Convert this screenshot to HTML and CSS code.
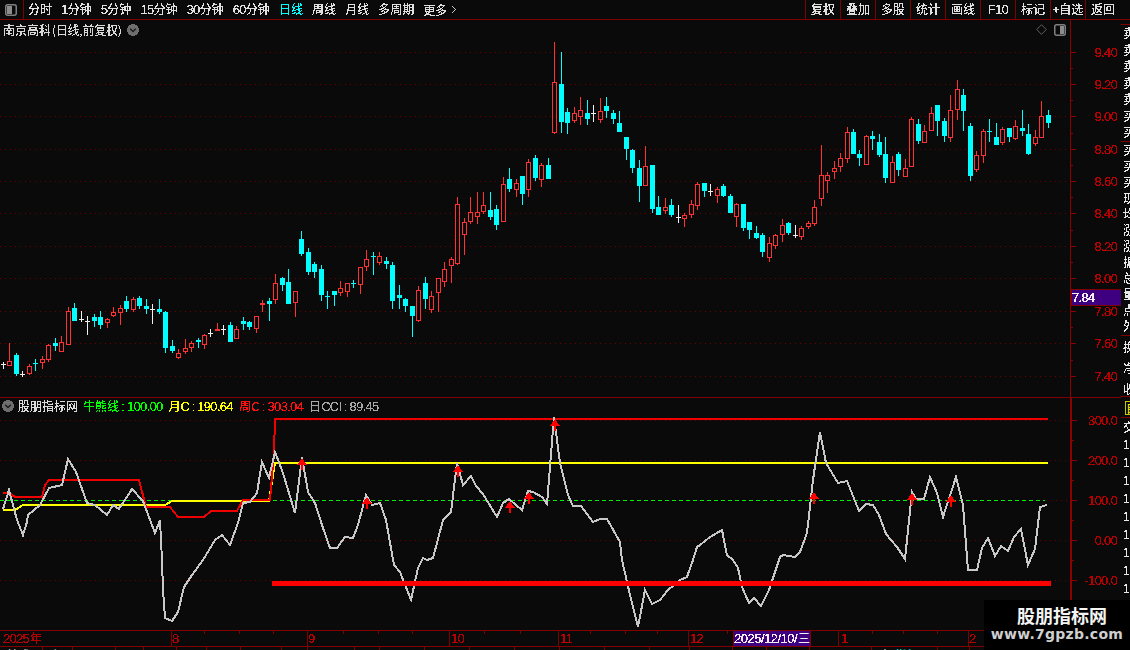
FILE: index.html
```html
<!DOCTYPE html>
<html lang="zh">
<head>
<meta charset="utf-8">
<title>南京高科 日线</title>
<link rel="stylesheet" href="styles.css">
</head>
<body>
<svg class="defs" width="0" height="0" aria-hidden="true">
  <filter id="aliased" x="-5%" y="-20%" width="110%" height="140%" color-interpolation-filters="sRGB">
    <feComponentTransfer><feFuncA type="discrete" tableValues="0 0 1 1 1"/></feComponentTransfer>
  </filter>
  <filter id="aliased-d" x="-5%" y="-20%" width="110%" height="140%" color-interpolation-filters="sRGB">
    <feComponentTransfer><feFuncA type="discrete" tableValues="0 1 1"/></feComponentTransfer>
  </filter>
</svg>
<div class="app">
  <header class="toolbar">
    <div class="panelbtn">
      <svg class="toggle" viewBox="0 0 12 12"><rect class="tg-frame" x="0.75" y="0.75" width="10.5" height="10.5" rx="2"/><rect class="tg-fill" x="2" y="2" width="5" height="8"/></svg>
    </div>
    <nav class="periods">
      <span>分时</span>
      <span><i class="n">1</i>分钟</span>
      <span><i class="n">5</i>分钟</span>
      <span><i class="n">15</i>分钟</span>
      <span><i class="n">30</i>分钟</span>
      <span><i class="n">60</i>分钟</span>
      <span class="active">日线</span>
      <span>周线</span>
      <span>月线</span>
      <span>多周期</span>
      <span class="more">更多<svg class="chev" viewBox="0 0 7 10"><path d="M1 1l4.5 4L1 9"/></svg></span>
    </nav>
    <nav class="tools">
      <span>复权</span><span>叠加</span><span>多股</span><span>统计</span><span>画线</span><span><i class="n">F10</i></span><span>标记</span><span>+自选</span><span>返回</span>
    </nav>
  </header>

  <div class="workspace">
    <div class="charts">
      <section class="pane pane-main">
        <svg id="mainChart" class="chart" width="1121" height="377" viewBox="0 20 1121 377"></svg>
        <div class="main-head">
          <div class="title">
            <span>南京高科</span><span class="title-sub">(日线,前复权)</span>
            <svg class="round" viewBox="0 0 12 12"><circle cx="6" cy="6" r="6"/><path d="M3.2 4.8L6 7.6l2.8-2.8"/></svg>
          </div>
          <div class="head-tools">
            <svg class="diamond" viewBox="0 0 12 12"><path d="M6 .8L11.2 6 6 11.2.8 6z"/></svg>
            <svg class="toggle" viewBox="0 0 12 12"><rect class="tg-frame" x="0.75" y="0.75" width="10.5" height="10.5" rx="2"/><rect class="tg-fill" x="6" y="2" width="4" height="8"/></svg>
          </div>
        </div>
      </section>

      <section class="pane pane-sub">
        <svg id="subChart" class="chart" width="1121" height="232" viewBox="0 398 1121 232"></svg>
        <div class="legend">
          <svg class="round" viewBox="0 0 12 12"><circle cx="6" cy="6" r="6"/><path d="M3.2 4.8L6 7.6l2.8-2.8"/></svg>
          <span class="legend-name">股朋指标网</span>
          <span class="green">牛熊线<i class="col">:</i><i class="n">100.00</i></span>
          <span class="yellow">月<i class="n">C</i><i class="col">:</i><i class="n">190.64</i></span>
          <span class="red">周<i class="n">C</i><i class="col">:</i><i class="n">303.04</i></span>
          <span class="grey">日<i class="n">CCI</i><i class="col">:</i><i class="n">89.45</i></span>
        </div>
      </section>

      <svg id="timeAxis" class="chart" width="1121" height="17" viewBox="0 630 1121 17"></svg>

      <div class="tabs">
        <span>技术</span><span>主</span><span></span><span></span><span></span><span></span><span></span><span></span><span></span><span></span><span></span><span></span><span></span><span></span><span></span><span></span><span></span><span></span><span></span><span></span><span></span><span></span><span>走<i class="cyan">指标</i></span><span></span><span></span>
      </div>
    </div>

    <aside class="side">
      <div class="side-gap"></div>
      <div class="side-group g1"><div>卖</div><div>卖</div><div>卖</div><div>卖</div><div>卖</div><div>买</div><div>买</div></div>
      <div class="side-group g2"><div>买</div><div>买</div><div>买</div><div>现</div><div>均</div><div>涨</div><div>涨</div><div>振</div><div>总</div><div>量</div><div>点</div><div>外</div></div>
      <div class="side-group g3"><div>换</div><div>净</div><div>收</div></div>
      <div class="side-yellow"><span>自</span></div>
      <div class="side-group g4"><div>交</div><div class="one">1</div><div class="one">1</div><div class="one">1</div><div class="one">1</div><div class="one">1</div><div class="one">1</div><div class="one">1</div><div class="one">1</div><div class="one">1</div></div>
    </aside>
  </div>

  <div class="watermark">
    <div class="wm-name">股朋指标网</div>
    <div class="wm-url">www.7gpzb.com</div>
  </div>
</div>
<script src="chart.js"></script>
</body>
</html>
```
FILE: styles.css
```css
* { box-sizing: border-box; }
html, body { margin: 0; padding: 0; }
body {
  width: 1130px;
  height: 650px;
  overflow: hidden;
  background: #0a0a0a;
  color: #e0e0e0;
  font: 12px/16px "Noto Sans CJK SC", "Liberation Sans", sans-serif;
}
i { font-style: normal; }
.defs { position: absolute; }
.n {
  font-family: "Liberation Sans", "Noto Sans CJK SC", sans-serif;
  font-size: 13px;
  display: inline-block;
  letter-spacing: -.7px;
}
.col { display: inline-block; width: 8px; text-align: center; font-family: "Liberation Sans", sans-serif; }
.app { position: relative; width: 1130px; height: 650px; overflow: hidden; }

.toolbar {
  display: flex;
  height: 20px;
  border-bottom: 1px solid #800000;
}
.panelbtn {
  width: 24px;
  border-right: 1px solid #800000;
  display: flex;
  align-items: center;
  padding-left: 5px;
}
.toggle { width: 12px; height: 12px; display: block; }
.tg-frame { fill: none; stroke: #808080; stroke-width: 1.5; }
.tg-fill { fill: #8c8c8c; }
.periods { display: flex; gap: 9.1px; padding-left: 4px; line-height: 18px; flex: 1; filter: url(#aliased); }
.periods .active { color: #00ffff; }
.more { display: inline-flex; align-items: center; gap: 4px; }
.chev { width: 6px; height: 9px; fill: none; stroke: #c8c8c8; stroke-width: 1; }
.tools { display: flex; width: 325px; }
.tools span {
  width: 35px;
  border-left: 1px solid #800000;
  text-align: center;
  line-height: 18px;
}
.tools span:last-child { width: 45px; padding-right: 10px; }

.workspace { display: flex; height: 630px; }
.charts { width: 1121px; flex: none; }
.side {
  width: 9px;
  flex: none;
  overflow: hidden;
  color: #e8e8e8;
  white-space: nowrap;
  padding-left: 1px;
}
.chart { display: block; }
.pane { position: relative; }
.pane-main { height: 377px; border-bottom: 0; }
.pane-sub { height: 233px; border-top: 1px solid #800000; }

.main-head {
  position: absolute;
  left: 0;
  top: 0;
  width: 1070px;
  height: 19px;
  display: flex;
  justify-content: space-between;
  align-items: center;
  padding: 0 4px 0 3px;
}
.title { display: flex; align-items: center; color: #d8d8d8; }
.title-sub { margin-left: 1px; letter-spacing: -.25px; }
.round { width: 12px; height: 12px; margin-left: 6px; }
.round circle { fill: #6e6e6e; }
.round path { fill: none; stroke: #1c1c1c; stroke-width: 1.4; }
.head-tools { display: flex; align-items: center; gap: 7px; }
.diamond { width: 11px; height: 11px; fill: none; stroke: #6a6a6a; stroke-width: 1; }

.legend {
  position: absolute;
  left: 2px;
  top: 0;
  height: 16px;
  display: flex;
  align-items: center;
  gap: 6px;
  white-space: nowrap;
}
.legend .round { margin-left: 0; margin-right: -2px; }
.legend-name { color: #dcdcdc; margin-right: -1px; }
.green { color: #00ff00; }
.yellow { color: #ffff00; }
.red { color: #ff1010; }
.grey { color: #a8a8a8; }

.tabs {
  display: grid;
  grid-template-columns: 43px 30px 43px 28px 33px 30px 34px 41px 26px 47px 25px 45px 45px 45px 45px 45px 45px 40px 43px 34px 43px 62px 66px 32px 35px;
  height: 3px;
  overflow: hidden;
  color: #e0e0e0;
  white-space: nowrap;
}
.tabs span {
  height: 14px;
  border-right: 1px solid #800000;
  padding-left: 7px;
  line-height: 16px;
  overflow: hidden;
}
.tabs .cyan { color: #00ffff; margin-left: 4px; }

.side-gap { height: 5px; margin-left: -1px; border-bottom: 1px solid #800000; }
.side-group { border-bottom: 1px solid #800000; margin-left: -1px; padding-left: 2px; }
.side-group div { width: 12px; }
.g1 { height: 117px; }
.g1 div { line-height: 16.5px; }
.g2 { height: 194px; }
.g2 div { line-height: 16px; }
.g3 { height: 61px; }
.g3 div { line-height: 21px; }
.side-yellow { height: 21px; padding: 4px 0 0 4px; border-bottom: 1px solid #800000; margin-left: -1px; }
.side-yellow span {
  display: block;
  width: 14px;
  height: 14px;
  line-height: 12px;
  border: 1px solid #c8c800;
  color: #ffff00;
}
.g4 { border-bottom: 0; }
.g4 div { line-height: 18px; }
.g4 .one { font-family: "Liberation Sans", sans-serif; }

.watermark {
  position: absolute;
  right: 0;
  bottom: 0;
  width: 146px;
  height: 50px;
  background: #000;
  text-align: center;
  color: #fff;
}
.wm-name { font-size: 18px; font-weight: 700; line-height: 22px; margin-top: 4px; padding-left: 10px; color: #f4f4f4; }
.wm-url { font: 700 14px/18px "DejaVu Sans", sans-serif; color: #cfcfcf; letter-spacing: .25px; margin-top: -1px; }

.title, .legend-name, .legend, .tools, .side-group { filter: url(#aliased); }

/* chart parts drawn by chart.js */
.crisp { shape-rendering: crispEdges; }
.grid { stroke: #6e0000; stroke-width: 1; stroke-dasharray: 1 4; fill: none; }
.axis { stroke: #8b0000; fill: none; }
.tick { stroke: #8b0000; }
.sep { stroke: #800000; }
.lbl {
  font: 13px "Liberation Sans", sans-serif;
  letter-spacing: -.7px;
  fill: #b40000;
  text-anchor: end;
  filter: url(#aliased-d);
}
.tag { fill: #3e0080; stroke: #800000; }
.tag-txt { font: 13px "Liberation Sans", sans-serif; letter-spacing: -.7px; fill: #f0f0f0; filter: url(#aliased-d); }
.w-red { stroke: #ff3232; }
.w-cyan { stroke: #00ffff; }
.w-white { stroke: #f0f0f0; }
.b-red { fill: none; stroke: #ff3232; }
.b-redf { fill: #ff3232; }
.b-cyan { fill: #00ffff; }
.l-red { fill: none; stroke: #ee0000; stroke-width: 2; }
.l-yellow { fill: none; stroke: #ffff00; stroke-width: 2; }
.l-grey { fill: none; stroke: #c8c8c8; stroke-width: 2; }
.l-thick { stroke: #ff0000; stroke-width: 5; }
.l-dash { stroke: #00ee00; stroke-width: 1; stroke-dasharray: 4 3; }
.arrow { fill: #ff0000; }
.t-lbl { font: 13px "Liberation Sans", "Noto Sans CJK SC", sans-serif; letter-spacing: -.7px; fill: #b40000; filter: url(#aliased-d); }
.t-cn { font: 12px "Noto Sans CJK SC", sans-serif; fill: #b40000; filter: url(#aliased); }
.t-sel { fill: #3e0080; }
.t-seltxt { font: 13px "Liberation Sans", sans-serif; letter-spacing: -.5px; fill: #f0f0f0; filter: url(#aliased-d); }
.t-selcn { font: 12px "Noto Sans CJK SC", sans-serif; fill: #f0f0f0; }
```
FILE: chart.js
```js
// Candle data: type, high, body top, body bottom, low. Values are three times
// the pixel offset from the block's base row.
var blocks = [
  { y0: 230, rows: [
    ['w',398,403,403,417],['r',339,393,405,405],['c',370,375,432,438],['w',423,432,432,441],['r',403,408,429,432],
    ['x',388,399,399,423],['r',378,387,396,414],['r',342,345,387,393],['c',324,339,348,363],['r',318,336,363,363],
    ['r',232,243,342,342],['c',219,234,273,273],['w',243,268,268,276],['w',258,273,273,315],['c',252,261,273,291],
    ['c',243,261,285,297],['r',264,267,276,291],['r',231,246,255,258],['r',225,234,246,282],['c',198,213,237,246],
    ['r',201,207,237,243],['c',198,204,228,237],['c',207,228,237,252],['w',222,237,237,282],['c',207,237,246,252],
    ['c',243,246,354,369],['c',330,348,363,369],['r',357,369,381,384],['r',327,354,363,369],['r',333,339,351,363],
    ['c',324,330,336,354],['r',312,315,342,354],['w',297,309,309,321],['f',279,297,303,303],['w',285,298,298,315],
    ['c',276,285,336,336],['r',288,297,324,324],['c',261,273,282,300],['c',273,276,291,300],['r',258,258,294,306],
    ['f',210,219,225,246],['c',204,213,222,273],['r',132,159,207,219],['c',141,144,165,183],['c',117,156,222,222],
    ['r',183,183,216,258]
  ]},
  { y0: 150, rows: [
    ['c',243,267,312,318],['c',294,306,366,375],['c',336,342,366,384],['c',345,357,435,453],['x',423,440,440,477],
    ['c',423,423,435,468],['r',393,415,426,435],['r',399,400,423,438],['x',390,401,401,414],['r',351,351,402,429],
    ['r',300,328,348,360],['x',306,319,319,375],['r',306,318,336,342],['c',321,333,342,357],['c',336,345,453,477],
    ['c',405,435,444,477],['c',444,447,468,486],['c',468,468,498,561],['r',408,420,510,513],['c',381,399,447,477],
    ['r',423,438,477,486],['r',384,384,426,483],['r',336,357,393,408],['r',321,327,345,396],['r',141,162,339,342],
    ['r',204,216,252,312],['r',141,186,213,219],['r',126,186,198,219],['r',126,165,183,189],['c',126,180,201,210],
    ['c',165,177,225,240],['r',81,102,213,213],['c',54,87,117,126],['r',87,99,117,138],['c',78,78,132,165],
    ['r',27,36,117,138],['c',15,24,84,93],['r',39,45,87,108],['c',24,45,87,87]
  ]},
  { y0: 0, rows: [
    ['r',126,246,396,399],['c',156,252,366,399],['c',324,336,369,402],['r',321,339,360,366],['r',291,330,348,372],
    ['c',300,339,357,375],['w',315,339,339,366],['r',294,333,357,366]
  ]},
  { y0: 70, rows: [
    ['c',81,108,123,144],['c',120,129,147,162],['c',123,159,186,186],['c',201,201,237,270],['c',237,240,294,309],
    ['c',270,294,348,396],['r',228,288,345,345],['c',285,285,417,429],['c',378,411,435,435],['r',384,411,420,429],
    ['c',387,405,435,441],['w',405,441,441,459],['r',429,435,444,468],['r',390,402,432,441],['r',336,342,405,417],
    ['c',339,339,363,381],['w',342,364,364,378],['r',351,357,375,396],['c',342,348,378,381],['c',372,378,429,429],
    ['r',399,402,438,468],['c',402,402,474,483],['c',456,456,480,507],['c',468,489,504,507],['c',489,495,546,561],
    ['r',501,519,561,573],['r',492,495,525,534],['r',447,465,492,513],['c',456,459,489,495],['w',465,496,496,504],
    ['r',468,474,498,507],['r',453,459,468,474],['r',390,411,459,465],['r',225,315,384,405],['r',306,315,330,366],
    ['r',273,294,303,324],['r',249,264,288,303],['r',171,186,265,276],['c',177,186,252,252],['c',240,252,264,288],
    ['r',195,198,282,282],['c',183,198,207,240],['c',192,216,255,261],['c',201,252,324,339],['r',258,276,336,336],
    ['c',246,252,300,318],['r',267,294,318,318],['r',141,147,288,288],['c',147,162,213,222],['r',165,183,216,216],
    ['r',111,129,180,180],['c',105,105,153,198],['c',144,153,198,216],['r',75,120,201,213],['r',30,57,117,147],
    ['c',57,75,123,183],['c',159,168,318,333],['r',243,255,297,303],['r',177,183,255,276],['x',147,184,184,216],
    ['c',159,201,225,225],['r',171,177,216,222],['c',174,174,201,216],['r',150,168,204,207],['c',120,174,183,198],
    ['c',162,192,252,255],['r',180,201,219,225],['r',93,138,201,201],['c',120,135,159,174]
  ]}
];

var SVG = 'http://www.w3.org/2000/svg';
function add(parent, tag, attrs, text) {
  var el = document.createElementNS(SVG, tag);
  for (var k in attrs) el.setAttribute(k, attrs[k]);
  if (text !== undefined) el.textContent = text;
  parent.appendChild(el);
  return el;
}
function hline(p, x1, x2, y, cls) { add(p, 'line', { x1: x1, x2: x2, y1: y, y2: y, 'class': cls }); }
function vline(p, x, y1, y2, cls) { add(p, 'line', { x1: x, x2: x, y1: y1, y2: y2, 'class': cls }); }

function drawMain(svg) {
  var g = add(svg, 'g', { 'class': 'crisp' });
  var levels = [[52,'9.40'],[84,'9.20'],[116,'9.00'],[149,'8.80'],[181,'8.60'],[213,'8.40'],[246,'8.20'],[278,'8.00'],[311,'7.80'],[343,'7.60'],[376,'7.40']];
  levels.forEach(function (l) { hline(g, 0, 1070, l[0] + .5, 'grid'); hline(g, 1070, 1076, l[0] + .5, 'tick'); });
  for (var i = 0; i + 1 < levels.length; i++) {
    var m = Math.round((levels[i][0] + levels[i + 1][0]) / 2) + .5;
    hline(g, 1070, 1073, m, 'tick');
  }
  vline(g, 1070.5, 20, 397, 'axis');
  levels.forEach(function (l) { add(svg, 'text', { x: 1117, y: l[0] + 5, 'class': 'lbl' }, l[1]); });

  var n = 0;
  blocks.forEach(function (b) {
    b.rows.forEach(function (row) {
      var cx = Math.floor(3.3 + 6.49 * n) + .5;
      var f = function (v) { return Math.floor(b.y0 + v / 3); };
      var hi = f(row[1]), top = f(row[2]), bot = f(row[3]), lo = f(row[4]), t = row[0];
      if (t === 'r') {
        if (hi < top) vline(g, cx, hi, top, 'w-red');
        if (lo > bot) vline(g, cx, bot, lo + 1, 'w-red');
        add(g, 'rect', { x: cx - 2, y: top + .5, width: 4, height: Math.max(bot - top, 1), 'class': 'b-red' });
      } else if (t === 'f') {
        vline(g, cx, hi, lo, 'w-red');
        add(g, 'rect', { x: cx - 2.5, y: top, width: 5, height: Math.max(bot - top, 2), 'class': 'b-redf' });
      } else if (t === 'c') {
        vline(g, cx, hi, lo, 'w-cyan');
        add(g, 'rect', { x: cx - 2.5, y: top, width: 5, height: Math.max(bot - top, 1), 'class': 'b-cyan' });
      } else {
        var cls = t === 'w' ? 'w-white' : 'w-cyan';
        vline(g, cx, hi, lo, cls);
        hline(g, cx - 2.5, cx + 2.5, top + .5, cls);
      }
      n++;
    });
  });

  add(svg, 'rect', { x: 1071, y: 289.5, width: 50, height: 16, 'class': 'tag crisp' });
  add(svg, 'text', { x: 1072, y: 302, 'class': 'tag-txt' }, '7.84');
}

function pts(list) { return list.map(function (p) { return p.join(','); }).join(' '); }

var cci = [[3,509],[9,490],[17,520],[23,535],[27,522],[28,515],[40,505],[49,488],[62,485],[68,459],[76,472],[87,503],[95,505],[107,515],[113,505],[119,509],[132,489],[143,501],[149,517],[155,533],[160,520],[162,560],[163,590],[165,618],[172,621],[178,612],[184,587],[192,575],[203,560],[215,540],[222,535],[230,545],[238,523],[243,503],[250,502],[257,493],[262,462],[269,478],[275,452],[283,473],[295,513],[302,457],[308,492],[315,503],[322,525],[330,548],[337,548],[345,537],[353,538],[358,525],[366,495],[372,505],[380,503],[386,520],[394,565],[400,572],[411,600],[418,568],[423,558],[427,560],[433,558],[443,520],[451,512],[457,463],[463,485],[471,476],[476,486],[483,494],[497,517],[503,503],[509,499],[522,510],[528,491],[533,492],[542,497],[547,504],[554,417],[560,463],[568,495],[573,506],[581,506],[593,522],[600,519],[607,519],[620,542],[622,560],[630,595],[638,627],[645,590],[652,604],[660,600],[668,590],[680,580],[687,577],[693,560],[697,547],[700,545],[710,537],[722,530],[727,555],[733,560],[738,568],[742,587],[749,603],[754,598],[761,606],[769,590],[780,557],[783,555],[795,557],[800,552],[807,533],[813,480],[820,432],[826,463],[838,483],[847,481],[859,511],[866,504],[873,505],[879,515],[886,534],[897,547],[905,559],[912,492],[916,499],[924,499],[930,477],[937,493],[943,517],[956,477],[963,505],[968,570],[977,570],[982,548],[988,538],[995,556],[1001,546],[1008,551],[1014,537],[1021,529],[1027,560],[1028,565],[1035,549],[1040,507],[1047,505]];
var redLine = [[3,493],[9,493],[15,497],[42,497],[45,485],[49,480],[139,480],[146,507],[170,507],[178,517],[204,517],[211,511],[237,511],[243,500],[270,500],[274,452],[275,419],[1048,419]];
var yellowLine = [[3,510],[15,510],[23,505],[165,505],[172,501],[269,501],[275,463],[278,463],[1048,463]];
var arrows = [[302,458],[367,497],[458,465],[510,501],[529,492],[555,419],[814,492],[912,493],[951,495]];

function drawSub(svg) {
  var g = add(svg, 'g', { 'class': 'crisp' });
  var levels = [[420,'300.0'],[460,'200.0'],[500,'100.0'],[540,'0.00'],[580,'-100.0']];
  levels.forEach(function (l, i) {
    if (i === 2) hline(g, 1046, 1070, l[0] + .5, 'grid'); else hline(g, 0, 1070, l[0] + .5, 'grid');
    hline(g, 1070, 1077, l[0] + .5, 'tick');
    add(svg, 'text', { x: 1117, y: l[0] + 5, 'class': 'lbl' }, l[1]);
  });
  [440, 480, 520, 560, 600, 620].forEach(function (y) { hline(g, 1070, 1074, y + .5, 'tick'); });
  add(g, 'rect', { x: 1070, y: 398, width: 2, height: 232, fill: '#8b0000' });
  hline(g, 0, 1045, 500.5, 'l-dash');
  add(g, 'polyline', { points: pts(yellowLine), 'class': 'l-yellow' });
  add(g, 'polyline', { points: pts(redLine), 'class': 'l-red' });
  add(g, 'polyline', { points: pts(cci), 'class': 'l-grey' });
  hline(g, 272, 1051, 583.5, 'l-thick');
  arrows.forEach(function (a) {
    var x = a[0], y = a[1];
    add(g, 'path', { 'class': 'arrow', d: 'M' + (x - 5) + ' ' + (y + 7) + 'L' + x + ' ' + y + 'L' + (x + 5) + ' ' + (y + 7) + 'H' + (x + 1) + 'V' + (y + 12) + 'H' + (x - 1) + 'V' + (y + 7) + 'Z' });
  });
}

function drawTime(svg) {
  var g = add(svg, 'g', { 'class': 'crisp' });
  add(g, 'rect', { x: 733, y: 631, width: 77, height: 15, 'class': 't-sel' });
  hline(g, 0, 1121, 630.5, 'sep');
  hline(g, 0, 1121, 646.5, 'sep');
  [171, 307, 449, 558, 688, 733, 810, 838, 968, 1070].forEach(function (x) { vline(g, x + .5, 631, 646, 'sep'); });
  [204, 239, 273, 343, 378, 412, 484, 520, 590, 625, 657, 727, 768, 872, 903, 937, 1003, 1036].forEach(function (x) { vline(g, x + .5, 631, 634, 'sep'); });
  add(svg, 'text', { x: 3, y: 643, 'class': 't-lbl' }, '2025');
  add(svg, 'text', { x: 30, y: 643, 'class': 't-cn' }, '年');
  [[172,'8'],[308,'9'],[451,'10'],[560,'11'],[690,'12'],[841,'1'],[969,'2']].forEach(function (m) {
    add(svg, 'text', { x: m[0], y: 643, 'class': 't-lbl' }, m[1]);
  });
  add(svg, 'text', { x: 734, y: 643, 'class': 't-seltxt' }, '2025/12/10/');
  add(svg, 'text', { x: 798, y: 643, 'class': 't-selcn' }, '三');
}

drawMain(document.getElementById('mainChart'));
drawSub(document.getElementById('subChart'));
drawTime(document.getElementById('timeAxis'));
```
